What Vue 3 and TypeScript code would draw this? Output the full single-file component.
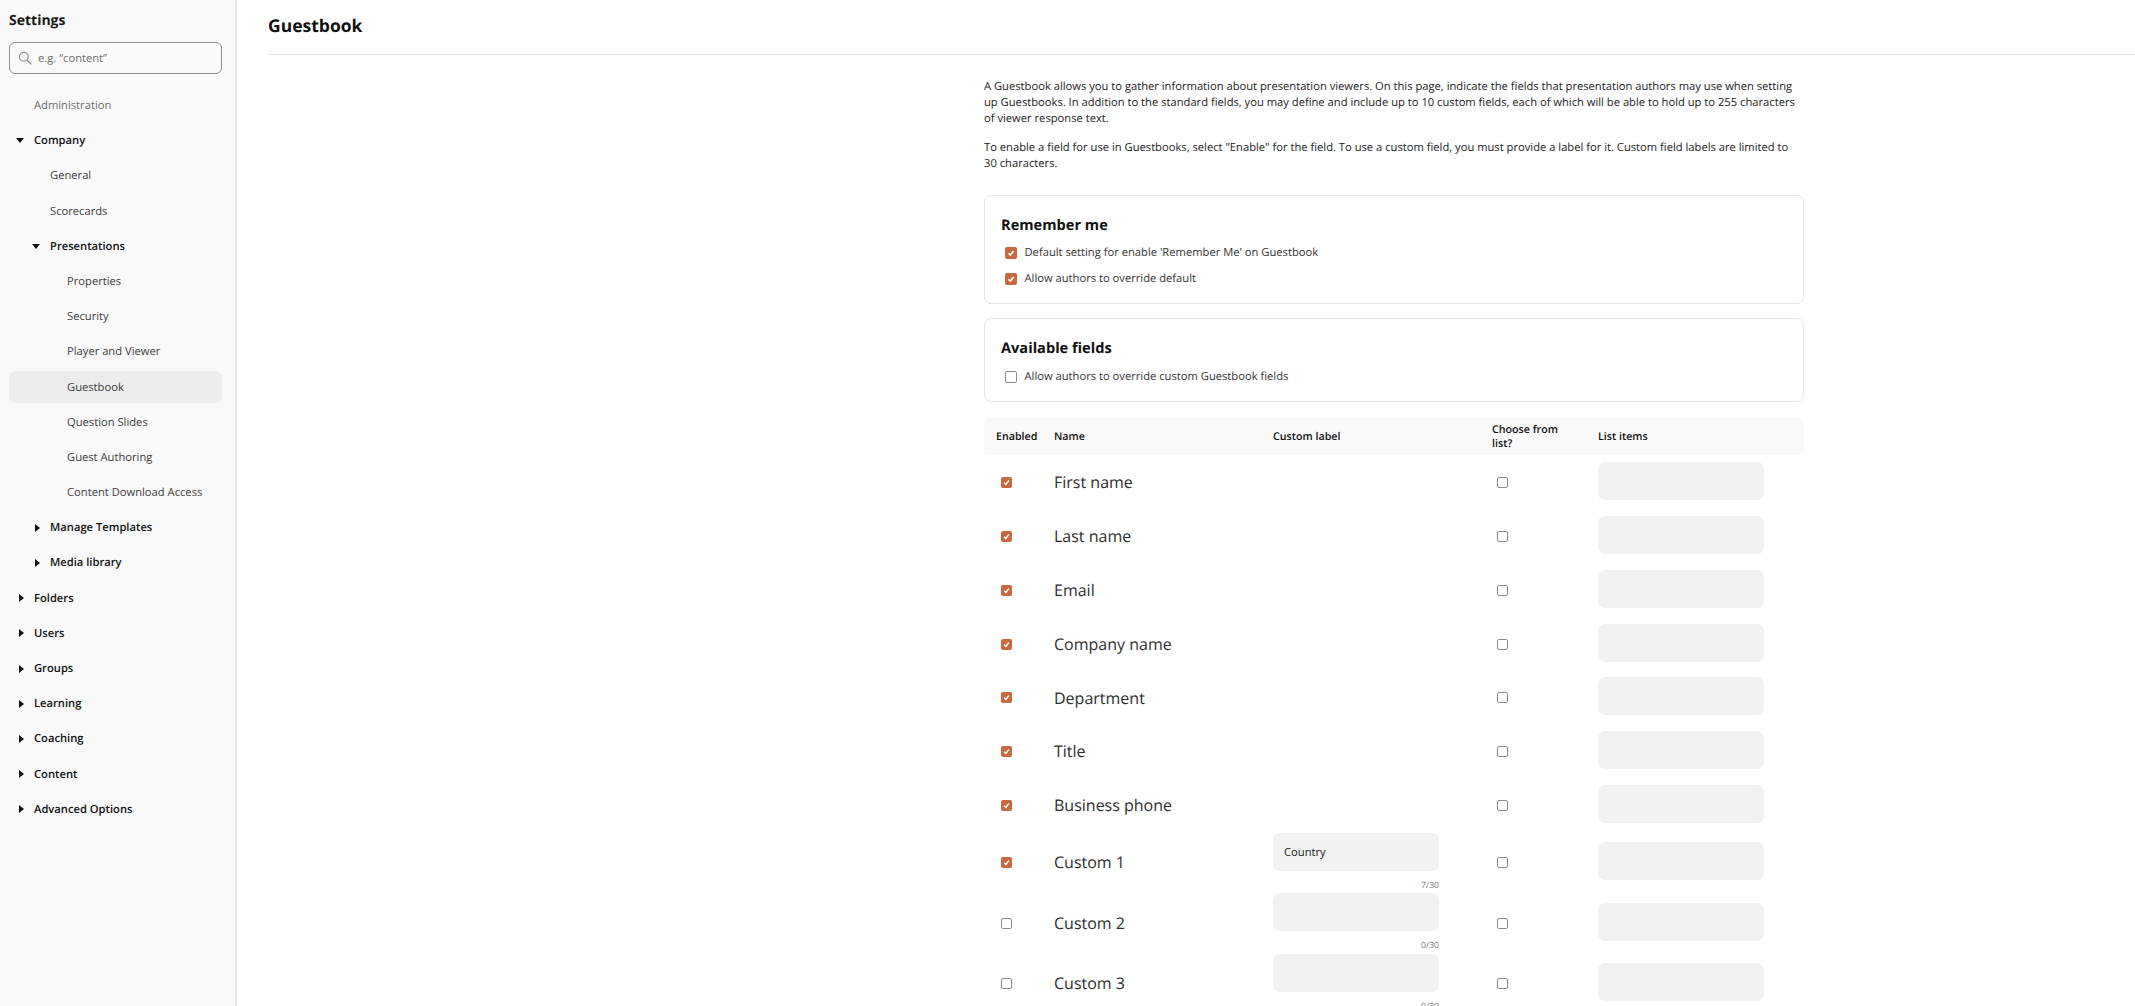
<script setup lang="ts">
interface NavItem { label: string; level: number; kind: 'plain' | 'open' | 'closed' | 'muted'; active?: boolean }
const nav: NavItem[] = [
  { label: 'Administration', level: 0, kind: 'muted' },
  { label: 'Company', level: 0, kind: 'open' },
  { label: 'General', level: 1, kind: 'plain' },
  { label: 'Scorecards', level: 1, kind: 'plain' },
  { label: 'Presentations', level: 1, kind: 'open' },
  { label: 'Properties', level: 2, kind: 'plain' },
  { label: 'Security', level: 2, kind: 'plain' },
  { label: 'Player and Viewer', level: 2, kind: 'plain' },
  { label: 'Guestbook', level: 2, kind: 'plain', active: true },
  { label: 'Question Slides', level: 2, kind: 'plain' },
  { label: 'Guest Authoring', level: 2, kind: 'plain' },
  { label: 'Content Download Access', level: 2, kind: 'plain' },
  { label: 'Manage Templates', level: 1, kind: 'closed' },
  { label: 'Media library', level: 1, kind: 'closed' },
  { label: 'Folders', level: 0, kind: 'closed' },
  { label: 'Users', level: 0, kind: 'closed' },
  { label: 'Groups', level: 0, kind: 'closed' },
  { label: 'Learning', level: 0, kind: 'closed' },
  { label: 'Coaching', level: 0, kind: 'closed' },
  { label: 'Content', level: 0, kind: 'closed' },
  { label: 'Advanced Options', level: 0, kind: 'closed' },
]
interface Field { name: string; on: boolean; custom?: string }
const fields: Field[] = [
  { name: 'First name', on: true },
  { name: 'Last name', on: true },
  { name: 'Email', on: true },
  { name: 'Company name', on: true },
  { name: 'Department', on: true },
  { name: 'Title', on: true },
  { name: 'Business phone', on: true },
  { name: 'Custom 1', on: true, custom: 'Country' },
  { name: 'Custom 2', on: false, custom: '' },
  { name: 'Custom 3', on: false, custom: '' },
]
</script>

<template>
  <div class="app">
    <aside class="side">
      <h2 class="side-title">Settings</h2>
      <div class="search">
        <svg width="14" height="14" viewBox="0 0 14 14" fill="none" stroke="#8a8a8a" stroke-width="1.1">
          <circle cx="5.8" cy="5.8" r="4.4" />
          <path d="M9 9l4 4" stroke-linecap="round" />
        </svg>
        <span>e.g. “content”</span>
      </div>
      <nav class="nav">
        <div
          v-for="item in nav"
          :key="item.label + item.level"
          class="row"
          :class="['lv' + item.level, item.kind, { active: item.active }]"
        >
          <span v-if="item.kind === 'open'" class="tri-down"></span>
          <span v-else-if="item.kind === 'closed'" class="tri-right"></span>
          {{ item.label }}
        </div>
      </nav>
    </aside>
    <main class="main">
      <header class="head"><h1>Guestbook</h1></header>
      <div class="content">
        <p>A Guestbook allows you to gather information about presentation viewers. On this page, indicate the fields that presentation authors may use when setting up Guestbooks. In addition to the standard fields, you may define and include up to 10 custom fields, each of which will be able to hold up to 255 characters of viewer response text.</p>
        <p>To enable a field for use in Guestbooks, select "Enable" for the field. To use a custom field, you must provide a label for it. Custom field labels are limited to 30 characters.</p>
        <section class="card first">
          <h3>Remember me</h3>
          <label class="check-row"><span class="box on"><svg viewBox="0 0 12 12"><path d="M3.4 6.2l1.9 1.9L8.6 3.9" /></svg></span>Default setting for enable 'Remember Me' on Guestbook</label>
          <label class="check-row"><span class="box on"><svg viewBox="0 0 12 12"><path d="M3.4 6.2l1.9 1.9L8.6 3.9" /></svg></span>Allow authors to override default</label>
        </section>
        <section class="card second">
          <h3>Available fields</h3>
          <label class="check-row"><span class="box"></span>Allow authors to override custom Guestbook fields</label>
        </section>
        <div class="thead">
          <span>Enabled</span><span>Name</span><span>Custom label</span><span class="choose">Choose from list?</span><span>List items</span>
        </div>
        <div v-for="f in fields" :key="f.name" class="trow" :class="{ custom: f.custom !== undefined }">
          <span class="cell-check"><span class="box" :class="{ on: f.on }"><svg v-if="f.on" viewBox="0 0 12 12"><path d="M3.4 6.2l1.9 1.9L8.6 3.9" /></svg></span></span>
          <span class="name">{{ f.name }}</span>
          <div class="label-cell">
            <template v-if="f.custom !== undefined">
              <div class="input">{{ f.custom }}</div>
              <div class="count">{{ f.custom.length }}/30</div>
            </template>
          </div>
          <span class="cell-check"><span class="box"></span></span>
          <div class="input list"></div>
        </div>
      </div>
    </main>
  </div>
</template>

<style>
html, body { margin: 0; overflow: hidden; }
</style>

<style scoped>
.app { display: flex; height: 100vh; overflow: hidden; font-family: "Open Sans", sans-serif; color: #1f1f1f; background: #fff; text-rendering: geometricPrecision; }
.side { flex: 0 0 213px; background: #f9f9f9; border-right: 2px solid #e6e6e6; padding: 0 13px 0 9px; }
.side-title { margin: 0; padding-top: 11px; font-size: 14px; line-height: 19px; font-weight: 700; color: #1a1a1a; }
.search { margin-top: 12px; height: 30px; border: 1px solid #8f8f8f; border-radius: 6px; display: flex; align-items: center; gap: 6px; padding-left: 8px; font-size: 11.2px; color: #6f6f6f; }
.nav { margin-top: 15px; display: flex; flex-direction: column; gap: 3.2px; }
.row { position: relative; height: 32px; padding-top: 1px; box-sizing: border-box; display: flex; align-items: center; font-size: 11.2px; color: #3d3d3d; border-radius: 7px; }
.lv0 { padding-left: 25px; }
.lv1 { padding-left: 41px; }
.lv2 { padding-left: 58px; }
.muted { color: #6e6e6e; }
.open, .closed { font-weight: 600; color: #111; }
.active { background: #ececec; }
.tri-down { position: absolute; margin-left: -18px; width: 0; height: 0; border-left: 4.5px solid transparent; border-right: 4.5px solid transparent; border-top: 5px solid #111; }
.tri-right { position: absolute; margin-left: -15px; width: 0; height: 0; border-top: 4.5px solid transparent; border-bottom: 4.5px solid transparent; border-left: 5px solid #111; }
.main { flex: 1; min-width: 0; padding-left: 31px; }
.head { height: 52px; padding-bottom: 2px; border-bottom: 1px solid #e3e3e3; display: flex; align-items: center; }
.head h1 { margin: 0; font-size: 17.5px; font-weight: 700; color: #111; }
.content { width: 820px; margin-left: 716px; }
p { margin: 0 0 13px; max-width: 815px; font-size: 11.2px; line-height: 16px; color: #222; }
p:first-child { margin-top: 24px; }
.card { border: 1px solid #e4e4e4; border-radius: 7px; padding: 0 16px; box-sizing: border-box; }
.first { margin-top: 23px; height: 109px; }
.second { margin-top: 14px; height: 84px; }
.card h3 { margin: 0 0 4px; padding-top: 18px; font-size: 14.6px; line-height: 22px; font-weight: 700; color: #111; }
.second h3 { margin-bottom: 5px; }
.check-row { display: flex; align-items: center; gap: 8px; font-size: 11.2px; line-height: 16px; color: #333; height: 26px; padding-left: 3.5px; }
.check-row .box { width: 12px; height: 12px; }
.box { flex: none; box-sizing: border-box; width: 11px; height: 11px; border: 1px solid #8c8c8c; border-radius: 2px; display: block; }
.box.on { background: #c8683c; border: 0; }
.box svg { display: block; width: 100%; height: 100%; fill: none; stroke: #fff; stroke-width: 1.6; }
.thead { margin-top: 16px; height: 37px; background: #f9f9f9; border-radius: 5px; display: grid; grid-template-columns: 58px 219px 219px 106px 206px; align-items: center; font-size: 10.7px; line-height: 14px; font-weight: 600; color: #111; padding-left: 12px; box-sizing: border-box; }
.choose { max-width: 70px; }
.trow { display: grid; grid-template-columns: 58px 219px 219px 106px 206px; align-items: center; padding-left: 12px; height: 53.8px; }
.trow.custom { height: 60.5px; }
.name { font-size: 16px; color: #2d2d2d; padding-top: 1px; }
.cell-check { display: block; padding: 1.5px 0 0 5px; }
.input { height: 38px; background: #f1f1f1; border-radius: 7px; font-size: 11.2px; line-height: 39px; padding-left: 11px; box-sizing: border-box; color: #222; width: 166px; }
.list { margin-top: -1.5px; }
.count { font-size: 8.6px; line-height: 12px; color: #7a7a7a; text-align: right; width: 166px; margin-top: 8px; }
</style>
